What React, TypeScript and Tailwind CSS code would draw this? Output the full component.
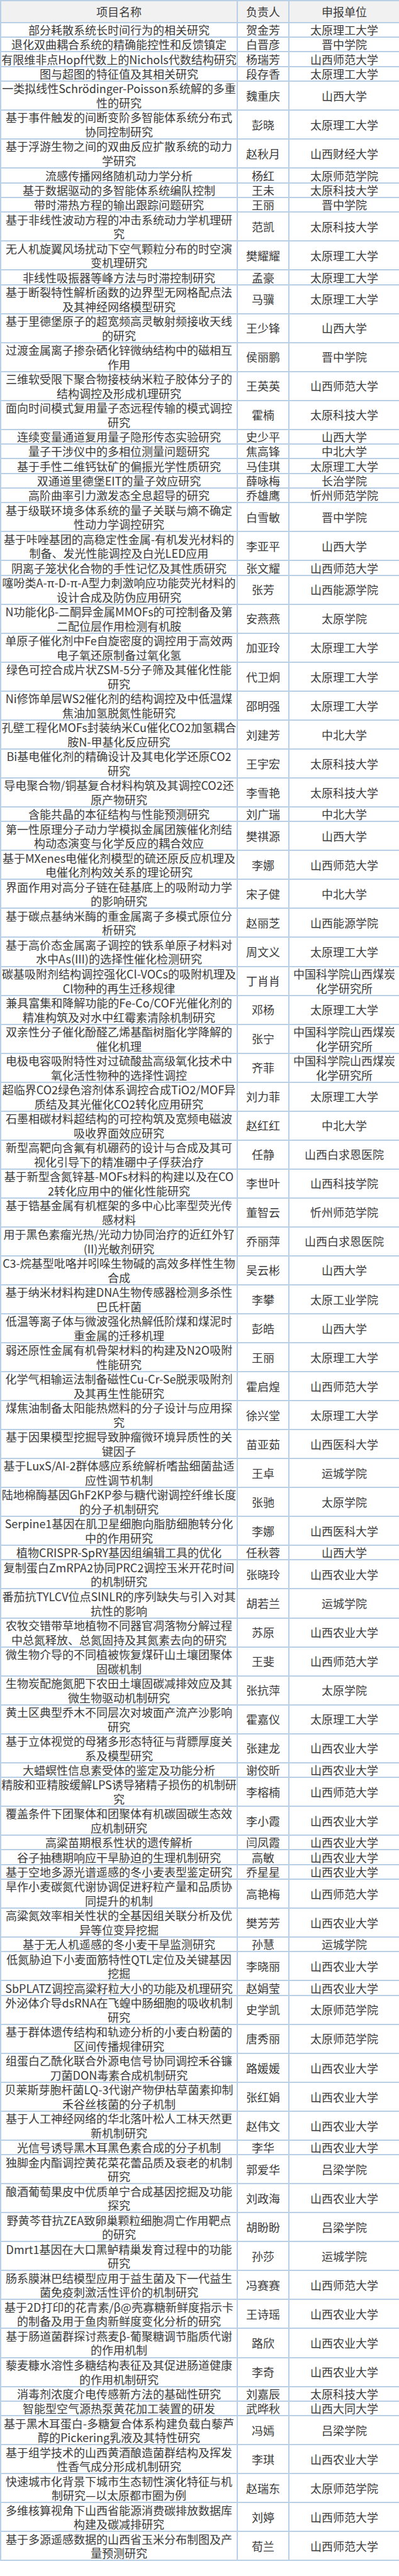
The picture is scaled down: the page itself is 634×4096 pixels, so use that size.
import React from "react";

const rows: [string, string, string][] = [
  ["部分耗散系统长时间行为的相关研究", "贺金芳", "太原理工大学"],
  ["退化双曲耦合系统的精确能控性和反馈镇定", "白晋彦", "晋中学院"],
  ["有限维非点Hopf代数上的Nichols代数结构研究", "杨瑞芳", "山西师范大学"],
  ["图与超图的特征值及其相关研究", "段存香", "太原理工大学"],
  ["一类拟线性Schrödinger-Poisson系统解的多重性的研究", "魏重庆", "山西大学"],
  ["基于事件触发的间断变阶多智能体系统分布式协同控制研究", "彭晓", "太原理工大学"],
  ["基于浮游生物之间的双曲反应扩散系统的动力学研究", "赵秋月", "山西财经大学"],
  ["流感传播网络随机动力学分析", "杨红", "太原师范学院"],
  ["基于数据驱动的多智能体系统编队控制", "王未", "太原科技大学"],
  ["带时滞热方程的输出跟踪问题研究", "王丽", "晋中学院"],
  ["基于非线性波动方程的冲击系统动力学机理研究", "范凯", "太原科技大学"],
  ["无人机旋翼风场扰动下空气颗粒分布的时空演变机理研究", "樊耀耀", "太原理工大学"],
  ["非线性吸振器等峰方法与时滞控制研究", "孟豪", "太原理工大学"],
  ["基于断裂特性解析函数的边界型无网格配点法及其神经网络模型研究", "马骥", "太原理工大学"],
  ["基于里德堡原子的超宽频高灵敏射频接收天线的研究", "王少锋", "山西大学"],
  ["过渡金属离子掺杂硒化锌微纳结构中的磁相互作用", "侯丽鹏", "晋中学院"],
  ["三维软受限下聚合物接枝纳米粒子胶体分子的结构调控及形成机理研究", "王英英", "山西师范大学"],
  ["面向时间模式复用量子态远程传输的模式调控研究", "霍楠", "太原科技大学"],
  ["连续变量通道复用量子隐形传态实验研究", "史少平", "山西大学"],
  ["量子干涉仪中的多相位测量问题研究", "焦高锋", "中北大学"],
  ["基于手性二维钙钛矿的偏振光学性质研究", "马佳琪", "太原理工大学"],
  ["双通道里德堡EIT的量子效应研究", "薛咏梅", "长治学院"],
  ["高阶曲率引力激发态全息超导的研究", "乔雄鹰", "忻州师范学院"],
  ["基于级联环境多体系统的量子关联与熵不确定性动力学调控研究", "白雪敏", "晋中学院"],
  ["基于咔唑基团的高稳定性金属-有机发光材料的制备、发光性能调控及白光LED应用", "李亚平", "山西大学"],
  ["阴离子笼状化合物的手性记忆及其性质研究", "张文耀", "山西师范大学"],
  ["噻吩类A-π-D-π-A型力刺激响应功能荧光材料的设计合成及防伪应用研究", "张芳", "山西能源学院"],
  ["N功能化β-二酮异金属MMOFs的可控制备及第二配位层作用检测有机胺", "安燕燕", "太原学院"],
  ["单原子催化剂中Fe自旋密度的调控用于高效两电子氧还原制备过氧化氢", "加亚玲", "太原理工大学"],
  ["绿色可控合成片状ZSM-5分子筛及其催化性能研究", "代卫炯", "太原理工大学"],
  ["Ni修饰单层WS2催化剂的结构调控及中低温煤焦油加氢脱氮性能研究", "邵明强", "太原理工大学"],
  ["孔壁工程化MOFs封装纳米Cu催化CO2加氢耦合胺N-甲基化反应研究", "刘建芳", "中北大学"],
  ["Bi基电催化剂的精确设计及其电化学还原CO2研究", "王宇宏", "太原科技大学"],
  ["导电聚合物/铜基复合材料构筑及其调控CO2还原产物研究", "李雪艳", "太原科技大学"],
  ["含能共晶的本征结构与性能预测研究", "刘广瑞", "中北大学"],
  ["第一性原理分子动力学模拟金属团簇催化剂结构动态演变与化学反应的耦合效应", "樊祺源", "山西大学"],
  ["基于MXenes电催化剂模型的硫还原反应机理及电催化剂构效关系的理论研究", "李娜", "山西师范大学"],
  ["界面作用对高分子链在硅基底上的吸附动力学的影响研究", "宋子健", "中北大学"],
  ["基于碳点基纳米酶的重金属离子多模式原位分析研究", "赵丽芝", "山西能源学院"],
  ["基于高价态金属离子调控的铁系单原子材料对水中As(III)的选择性催化检测研究", "周文义", "太原理工大学"],
  ["碳基吸附剂结构调控强化Cl-VOCs的吸附机理及Cl物种的再生迁移规律", "丁肖肖", "中国科学院山西煤炭化学研究所"],
  ["兼具富集和降解功能的Fe-Co/COF光催化剂的精准构筑及对水中红霉素清除机制研究", "邓杨", "太原理工大学"],
  ["双亲性分子催化酚醛乙烯基酯树脂化学降解的催化机理", "张宁", "中国科学院山西煤炭化学研究所"],
  ["电极电容吸附特性对过硫酸盐高级氧化技术中氧化活性物种的选择性调控", "齐菲", "中国科学院山西煤炭化学研究所"],
  ["超临界CO2绿色溶剂体系调控合成TiO2/MOF异质结及其光催化CO2转化应用研究", "刘力菲", "太原理工大学"],
  ["石墨相碳材料超结构的可控构筑及宽频电磁波吸收界面效应研究", "赵红红", "中北大学"],
  ["新型高靶向含氟有机硼药的设计与合成及其可视化引导下的精准硼中子俘获治疗", "任静", "山西白求恩医院"],
  ["基于新型含氮锌基-MOFs材料的构建以及在CO2转化应用中的催化性能研究", "李世叶", "山西科技学院"],
  ["基于锆基金属有机框架的多中心比率型荧光传感材料", "董智云", "忻州师范学院"],
  ["用于黑色素瘤光热/光动力协同治疗的近红外钌(II)光敏剂研究", "乔丽萍", "山西白求恩医院"],
  ["C3-烷基型吡咯并吲哚生物碱的高效多样性生物合成", "吴云彬", "山西大学"],
  ["基于纳米材料构建DNA生物传感器检测多杀性巴氏杆菌", "李攀", "太原工业学院"],
  ["低温等离子体与微波强化热解低阶煤和煤泥时重金属的迁移机理", "彭皓", "山西大学"],
  ["弱还原性金属有机骨架材料的构建及N2O吸附性能研究", "王丽", "太原理工大学"],
  ["化学气相输运法制备磁性Cu-Cr-Se脱汞吸附剂及其再生性能研究", "霍启煌", "山西师范大学"],
  ["煤焦油制备太阳能热燃料的分子设计与应用探究", "徐兴堂", "太原理工大学"],
  ["基于因果模型挖掘导致肿瘤微环境异质性的关键因子", "苗亚茹", "山西医科大学"],
  ["基于LuxS/AI-2群体感应系统解析嗜盐细菌盐适应性调节机制", "王卓", "运城学院"],
  ["陆地棉酶基因GhF2KP参与糖代谢调控纤维长度的分子机制研究", "张驰", "太原学院"],
  ["Serpine1基因在肌卫星细胞向脂肪细胞转分化中的作用研究", "李娜", "山西医科大学"],
  ["植物CRISPR-SpRY基因组编辑工具的优化", "任秋蓉", "山西大学"],
  ["复制蛋白ZmRPA2协同PRC2调控玉米开花时间的机制研究", "张晓玲", "山西农业大学"],
  ["番茄抗TYLCV位点SlNLR的序列缺失与引入对其抗性的影响", "胡若兰", "运城学院"],
  ["农牧交错带草地植物不同器官凋落物分解过程中总氮释放、总氮固持及其氮素去向的研究", "苏原", "山西农业大学"],
  ["微生物介导的不同植被恢复煤矸山土壤团聚体固碳机制", "王斐", "山西师范大学"],
  ["生物炭配施氮肥下农田土壤固碳减排效应及其微生物驱动机制研究", "张抗萍", "太原学院"],
  ["黄土区典型乔木不同层次对坡面产流产沙影响研究", "霍嘉仪", "太原理工大学"],
  ["基于立体视觉的母猪多形态特征与背膘厚度关系及模型研究", "张建龙", "山西农业大学"],
  ["大蜡螟性信息素受体的鉴定及功能分析", "谢佼昕", "山西农业大学"],
  ["精胺和亚精胺缓解LPS诱导猪精子损伤的机制研究", "李榕楠", "山西师范大学"],
  ["覆盖条件下团聚体和团聚体有机碳固碳生态效应机制研究", "李小霞", "山西农业大学"],
  ["高粱苗期根系性状的遗传解析", "闫凤霞", "山西农业大学"],
  ["谷子抽穗期响应干旱胁迫的生理机制研究", "高敏", "山西农业大学"],
  ["基于空地多源光谱遥感的冬小麦表型鉴定研究", "乔星星", "山西农业大学"],
  ["旱作小麦碳氮代谢协调促进籽粒产量和品质协同提升的机制", "高艳梅", "山西师范大学"],
  ["高粱氮效率相关性状的全基因组关联分析及优异等位变异挖掘", "樊芳芳", "山西农业大学"],
  ["基于无人机遥感的冬小麦干旱监测研究", "孙慧", "运城学院"],
  ["低氮胁迫下小麦面筋特性QTL定位及关键基因挖掘", "李晓丽", "山西农业大学"],
  ["SbPLATZ调控高粱籽粒大小的功能及机理研究", "赵娟莹", "山西农业大学"],
  ["外泌体介导dsRNA在飞蝗中肠细胞的吸收机制研究", "史学凯", "太原师范学院"],
  ["基于群体遗传结构和轨迹分析的小麦白粉菌的区间传播规律研究", "唐秀丽", "太原师范学院"],
  ["组蛋白乙酰化联合外源电信号协同调控禾谷镰刀菌DON毒素合成机制研究", "路媛媛", "山西农业大学"],
  ["贝莱斯芽胞杆菌LQ-3代谢产物伊枯草菌素抑制禾谷丝核菌的分子机制", "张红娟", "山西农业大学"],
  ["基于人工神经网络的华北落叶松人工林天然更新机制研究", "赵伟文", "山西农业大学"],
  ["光信号诱导黑木耳黑色素合成的分子机制", "李华", "山西农业大学"],
  ["独脚金内酯调控黄花菜花蕾品质及衰老的机制研究", "郭爱华", "吕梁学院"],
  ["酿酒葡萄果皮中优质单宁合成基因挖掘及功能探究", "刘政海", "山西农业大学"],
  ["野黄芩苷抗ZEA致卵巢颗粒细胞凋亡作用靶点的研究", "胡盼盼", "吕梁学院"],
  ["Dmrt1基因在大口黑鲈精巢发育过程中的功能研究", "孙莎", "运城学院"],
  ["肠系膜淋巴结模型应用于益生菌及下一代益生菌免疫刺激活性评价的机制研究", "冯赛赛", "山西师范大学"],
  ["基于2D打印的花青素/β@壳寡糖新鲜度指示卡的制备及用于鱼肉新鲜度变化分析的研究", "王诗瑶", "山西农业大学"],
  ["基于肠道菌群探讨燕麦β-葡聚糖调节脂质代谢的作用机制", "路欣", "山西农业大学"],
  ["藜麦糠水溶性多糖结构表征及其促进肠道健康的作用机制研究", "李奇", "山西农业大学"],
  ["消毒剂浓度介电传感新方法的基础性研究", "刘嘉辰", "太原科技大学"],
  ["智能型空气源热泵黄花加工装置的研发", "武晔秋", "山西大同大学"],
  ["基于黑木耳蛋白-多糖复合体系构建负载白藜芦醇的Pickering乳液及其特性研究", "冯嫣", "吕梁学院"],
  ["基于组学技术的山西黄酒酿造菌群结构及挥发性香气成分形成机制研究", "李琪", "山西农业大学"],
  ["快速城市化背景下城市生态韧性演化特征与机制研究—以太原都市圈为例", "赵瑞东", "太原师范学院"],
  ["多维核算视角下山西省能源消费碳排放数据库构建及碳减排研究", "刘婷", "山西师范大学"],
  ["基于多源遥感数据的山西省玉米分布制图及产量预测研究", "荀兰", "山西师范大学"],
];

export default function App() {
  return (
    <div className="w-[634px] bg-white font-['Noto_Sans_CJK_SC','Noto_Sans',sans-serif] text-[#3a3a3a]">
      <table className="w-[634px] table-fixed border-collapse text-[18px]">
        <colgroup>
          <col className="w-[376px]" />
          <col className="w-[82px]" />
          <col className="w-[176px]" />
        </colgroup>
        <thead>
          <tr className="bg-[#f1f1f1]">
            {["项目名称", "负责人", "申报单位"].map((h) => (
              <th
                key={h}
                className="border-2 border-[#b9cfe5] p-0 text-center align-middle font-normal"
              >
                <div className="leading-[32.8px]">{h}</div>
              </th>
            ))}
          </tr>
        </thead>
        <tbody>
          {rows.map((r, i) => (
            <tr key={i} className="bg-white">
              {r.map((c, j) => (
                <td
                  key={j}
                  className="border-2 border-[#b9cfe5] p-0 text-center align-middle break-all"
                >
                  <div className="-my-[0.7px] leading-[22.7px]">{c}</div>
                </td>
              ))}
            </tr>
          ))}
        </tbody>
      </table>
    </div>
  );
}
